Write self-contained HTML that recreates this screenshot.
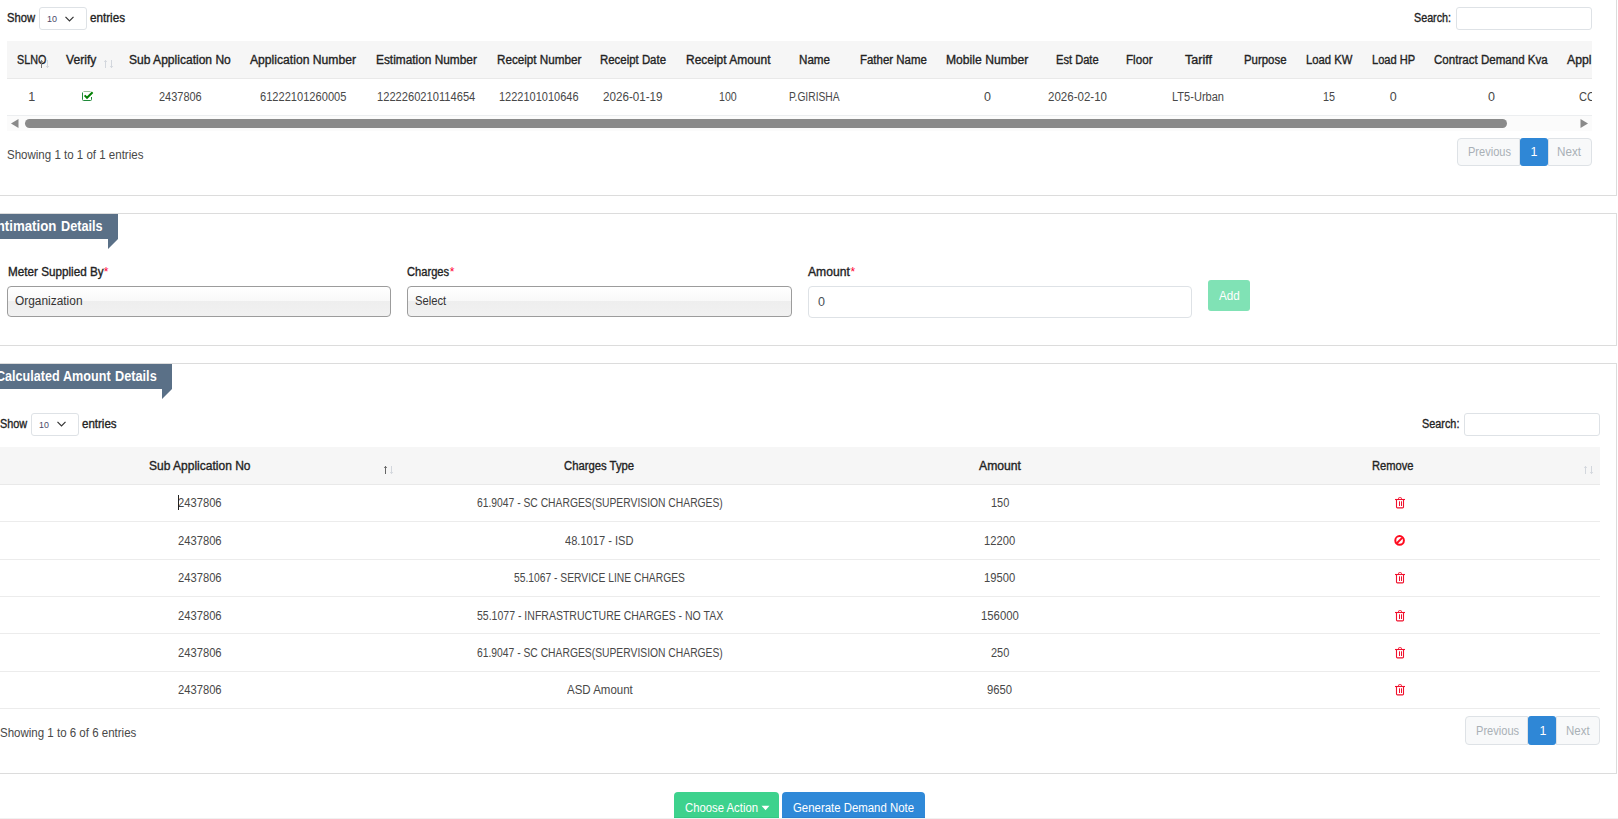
<!DOCTYPE html>
<html><head><meta charset="utf-8"><style>
html,body{margin:0;padding:0;}
body{width:1618px;height:819px;overflow:hidden;position:relative;background:#fff;font-family:"Liberation Sans",sans-serif;}
.t{position:absolute;white-space:nowrap;line-height:normal;transform-origin:0 0;}
.r{position:absolute;box-sizing:border-box;}
svg{position:absolute;}
</style></head><body>
<div class="r" style="left:-10px;top:-10px;width:1627px;height:206px;border:1px solid #dcdcdc;background:#fff;"></div>
<div class="t" style="left:7.40px;top:11.00px;font-size:12.5px;color:#232323;transform:scaleX(0.8978);-webkit-text-stroke:0.35px #232323;">Show</div>
<div class="r" style="left:39px;top:7px;width:48px;height:23px;border:1px solid #dee2e6;border-radius:3px;background:#fff;"></div>
<div class="t" style="left:46.70px;top:13.00px;font-size:9.5px;color:#4a4a68;transform:scaleX(0.9466);">10</div>
<svg style="left:64px;top:15px" width="11" height="8" viewBox="0 0 11 8"><path d="M1.5 1.8 L5.5 5.8 L9.5 1.8" fill="none" stroke="#333" stroke-width="1.2"/></svg>
<div class="t" style="left:90.00px;top:11.00px;font-size:12.5px;color:#232323;transform:scaleX(0.9330);-webkit-text-stroke:0.35px #232323;">entries</div>
<div class="t" style="left:1414.00px;top:11.00px;font-size:12.5px;color:#232323;transform:scaleX(0.8590);-webkit-text-stroke:0.35px #232323;">Search:</div>
<div class="r" style="left:1456px;top:7px;width:136px;height:23px;border:1px solid #dee2e6;border-radius:3px;background:#fff;"></div>
<div class="r" style="left:7px;top:41px;width:1585px;height:38px;background:#f6f6f6;border-bottom:1px solid #e9e9e9;"></div>
<div class="r" style="left:7px;top:115px;width:1585px;height:1px;background:#eceef0;"></div>
<div class="r" style="left:7px;top:116px;width:1585px;height:15px;background:#fbfbfb;"></div>
<div class="r" style="left:25px;top:119px;width:1482px;height:9px;background:#8a8a8a;border-radius:4.5px;"></div>
<svg style="left:10px;top:118px" width="10" height="11" viewBox="0 0 10 11"><path d="M1 5.5 L8.5 1 L8.5 10 Z" fill="#8a8a8a"/></svg>
<svg style="left:1579px;top:118px" width="10" height="11" viewBox="0 0 10 11"><path d="M9 5.5 L1.5 1 L1.5 10 Z" fill="#8a8a8a"/></svg>
<div class="t" style="left:16.70px;top:53.00px;font-size:12.5px;color:#232323;transform:scaleX(0.8608);-webkit-text-stroke:0.35px #232323;">SLNO</div>
<div class="t" style="left:65.50px;top:53.00px;font-size:12.5px;color:#232323;transform:scaleX(0.9692);-webkit-text-stroke:0.35px #232323;">Verify</div>
<div class="t" style="left:129.20px;top:53.00px;font-size:12.5px;color:#232323;transform:scaleX(0.9638);-webkit-text-stroke:0.35px #232323;">Sub Application No</div>
<div class="t" style="left:250.00px;top:53.00px;font-size:12.5px;color:#232323;transform:scaleX(0.9717);-webkit-text-stroke:0.35px #232323;">Application Number</div>
<div class="t" style="left:375.50px;top:53.00px;font-size:12.5px;color:#232323;transform:scaleX(0.9493);-webkit-text-stroke:0.35px #232323;">Estimation Number</div>
<div class="t" style="left:496.60px;top:53.00px;font-size:12.5px;color:#232323;transform:scaleX(0.9345);-webkit-text-stroke:0.35px #232323;">Receipt Number</div>
<div class="t" style="left:600.00px;top:53.00px;font-size:12.5px;color:#232323;transform:scaleX(0.9133);-webkit-text-stroke:0.35px #232323;">Receipt Date</div>
<div class="t" style="left:685.50px;top:53.00px;font-size:12.5px;color:#232323;transform:scaleX(0.9575);-webkit-text-stroke:0.35px #232323;">Receipt Amount</div>
<div class="t" style="left:799.00px;top:53.00px;font-size:12.5px;color:#232323;transform:scaleX(0.9295);-webkit-text-stroke:0.35px #232323;">Name</div>
<div class="t" style="left:859.80px;top:53.00px;font-size:12.5px;color:#232323;transform:scaleX(0.9159);-webkit-text-stroke:0.35px #232323;">Father Name</div>
<div class="t" style="left:946.40px;top:53.00px;font-size:12.5px;color:#232323;transform:scaleX(0.9711);-webkit-text-stroke:0.35px #232323;">Mobile Number</div>
<div class="t" style="left:1056.00px;top:53.00px;font-size:12.5px;color:#232323;transform:scaleX(0.8887);-webkit-text-stroke:0.35px #232323;">Est Date</div>
<div class="t" style="left:1126.30px;top:53.00px;font-size:12.5px;color:#232323;transform:scaleX(0.9306);-webkit-text-stroke:0.35px #232323;">Floor</div>
<div class="t" style="left:1185.00px;top:53.00px;font-size:12.5px;color:#232323;transform:scaleX(1.0042);-webkit-text-stroke:0.35px #232323;">Tariff</div>
<div class="t" style="left:1244.00px;top:53.00px;font-size:12.5px;color:#232323;transform:scaleX(0.9128);-webkit-text-stroke:0.35px #232323;">Purpose</div>
<div class="t" style="left:1305.80px;top:53.00px;font-size:12.5px;color:#232323;transform:scaleX(0.9025);-webkit-text-stroke:0.35px #232323;">Load KW</div>
<div class="t" style="left:1371.80px;top:53.00px;font-size:12.5px;color:#232323;transform:scaleX(0.8880);-webkit-text-stroke:0.35px #232323;">Load HP</div>
<div class="t" style="left:1434.30px;top:53.00px;font-size:12.5px;color:#232323;transform:scaleX(0.9245);-webkit-text-stroke:0.35px #232323;">Contract Demand Kva</div>
<div class="t" style="left:28.20px;top:90.00px;font-size:12.5px;color:#484848;letter-spacing:0.000px;">1</div>
<div class="t" style="left:158.80px;top:90.00px;font-size:12.5px;color:#484848;transform:scaleX(0.8775);">2437806</div>
<div class="t" style="left:259.60px;top:90.00px;font-size:12.5px;color:#484848;transform:scaleX(0.8877);">61222101260005</div>
<div class="t" style="left:377.30px;top:90.00px;font-size:12.5px;color:#484848;transform:scaleX(0.8912);">1222260210114654</div>
<div class="t" style="left:499.00px;top:90.00px;font-size:12.5px;color:#484848;transform:scaleX(0.8797);">1222101010646</div>
<div class="t" style="left:603.00px;top:90.00px;font-size:12.5px;color:#484848;transform:scaleX(0.9306);">2026-01-19</div>
<div class="t" style="left:719.00px;top:90.00px;font-size:12.5px;color:#484848;transform:scaleX(0.8489);">100</div>
<div class="t" style="left:789.40px;top:90.00px;font-size:12.5px;color:#484848;transform:scaleX(0.8214);">P.GIRISHA</div>
<div class="t" style="left:984.00px;top:90.00px;font-size:12.5px;color:#484848;letter-spacing:0.000px;">0</div>
<div class="t" style="left:1048.00px;top:90.00px;font-size:12.5px;color:#484848;transform:scaleX(0.9228);">2026-02-10</div>
<div class="t" style="left:1172.00px;top:90.00px;font-size:12.5px;color:#484848;transform:scaleX(0.8840);">LT5-Urban</div>
<div class="t" style="left:1323.00px;top:90.00px;font-size:12.5px;color:#484848;transform:scaleX(0.8633);">15</div>
<div class="t" style="left:1389.80px;top:90.00px;font-size:12.5px;color:#484848;letter-spacing:0.000px;">0</div>
<div class="t" style="left:1488.00px;top:90.00px;font-size:12.5px;color:#484848;letter-spacing:0.000px;">0</div>
<div style="position:absolute;left:1500px;top:41px;width:92px;height:75px;overflow:hidden">
<div class="t" style="left:67.30px;top:12.00px;font-size:12.5px;color:#232323;transform:scaleX(0.9795);-webkit-text-stroke:0.35px #232323;">Appl</div>
<div class="t" style="left:79.40px;top:49.00px;font-size:12.5px;color:#484848;transform:scaleX(0.8864);">CC</div>
</div>
<svg style="left:40px;top:60px" width="10" height="9" viewBox="0 0 10 9"><path d="M1.5 0.3 V8 M0.2 1.8 L1.5 0.4 L2.8 1.8" fill="none" stroke="#777" stroke-width="1"/><path d="M7.5 0 V7.7 M6.2 6.2 L7.5 7.6 L8.8 6.2" fill="none" stroke="#d3d7dd" stroke-width="1"/></svg>
<svg style="left:104px;top:60px" width="10" height="9" viewBox="0 0 10 9"><path d="M1.5 0.3 V8 M0.2 1.8 L1.5 0.4 L2.8 1.8" fill="none" stroke="#d3d7dd" stroke-width="1"/><path d="M7.5 0 V7.7 M6.2 6.2 L7.5 7.6 L8.8 6.2" fill="none" stroke="#d3d7dd" stroke-width="1"/></svg>
<svg style="left:82px;top:91px" width="13" height="11" viewBox="0 0 13 11"><path d="M1.5 0.5 H8.5" stroke="#9dbf9d" stroke-width="1" fill="none"/><path d="M0.5 1.5 V8.5 Q0.5 9.5 1.5 9.5 H8.5 Q9.5 9.5 9.5 8.5 V6" stroke="#1f8a3a" stroke-width="1" fill="none"/><path d="M2.6 4.4 L5 6.8 L10.6 1.2" fill="none" stroke="#038003" stroke-width="2"/></svg>
<div class="t" style="left:7.00px;top:148.00px;font-size:12.5px;color:#484848;transform:scaleX(0.9215);">Showing 1 to 1 of 1 entries</div>
<div class="r" style="left:1457px;top:138px;width:63px;height:28px;border:1px solid #dee2e6;border-radius:4px 0 0 4px;background:#f8f9fa;"></div>
<div class="r" style="left:1520px;top:138px;width:28px;height:28px;background:#2f87d6;border-radius:3px;"></div>
<div class="r" style="left:1548px;top:138px;width:44px;height:28px;border:1px solid #dee2e6;border-radius:0 4px 4px 0;background:#f8f9fa;"></div>
<div class="t" style="left:1468.00px;top:145.00px;font-size:12.5px;color:#a9b0b6;transform:scaleX(0.8841);">Previous</div>
<div class="t" style="left:1530.50px;top:145.00px;font-size:12.5px;color:#fff;letter-spacing:0.000px;">1</div>
<div class="t" style="left:1557.00px;top:145.00px;font-size:12.5px;color:#a9b0b6;transform:scaleX(0.9339);">Next</div>
<div class="r" style="left:-10px;top:213px;width:1627px;height:133px;border:1px solid #dcdcdc;background:#fff;"></div>
<svg style="left:0;top:0" width="120" height="251" viewBox="0 0 120 251"><path d="M0 214 H118 V239 L108 249 V239 H0 Z" fill="#5a7087"/></svg>
<div class="t" style="left:-6.69px;top:218px;font-size:14.5px;font-weight:700;color:#fff;transform:scaleX(0.9149)">Intimation</div>
<div class="t" style="left:61.00px;top:218px;font-size:14.5px;font-weight:700;color:#fff;transform:scaleX(0.8728)">Details</div>
<div class="t" style="left:7.80px;top:265.00px;font-size:12.5px;color:#222;transform:scaleX(0.9360);-webkit-text-stroke:0.35px #222;">Meter Supplied By</div>
<div class="t" style="left:103.80px;top:265.00px;font-size:12px;color:#ff0033;letter-spacing:0.000px;">*</div>
<div class="t" style="left:407.20px;top:265.00px;font-size:12.5px;color:#222;transform:scaleX(0.8910);-webkit-text-stroke:0.35px #222;">Charges</div>
<div class="t" style="left:449.80px;top:265.00px;font-size:12px;color:#ff0033;letter-spacing:0.000px;">*</div>
<div class="t" style="left:807.70px;top:265.00px;font-size:12.5px;color:#222;transform:scaleX(0.9727);-webkit-text-stroke:0.35px #222;">Amount</div>
<div class="t" style="left:850.50px;top:265.00px;font-size:12px;color:#ff0033;letter-spacing:0.000px;">*</div>
<div class="r" style="left:7px;top:286px;width:384px;height:31px;border:1px solid #9c9c9c;border-radius:4px;background:linear-gradient(#fff 0%,#f8f8f8 50%,#eeeeee 50%,#f1f1f1 100%);"></div>
<div class="r" style="left:407px;top:286px;width:385px;height:31px;border:1px solid #9c9c9c;border-radius:4px;background:linear-gradient(#fff 0%,#f8f8f8 50%,#eeeeee 50%,#f1f1f1 100%);"></div>
<div class="t" style="left:14.70px;top:294.00px;font-size:12.5px;color:#333;transform:scaleX(0.9524);">Organization</div>
<div class="t" style="left:414.80px;top:294.00px;font-size:12.5px;color:#333;transform:scaleX(0.8982);">Select</div>
<div class="r" style="left:808px;top:286px;width:384px;height:32px;border:1px solid #dee2e6;border-radius:4px;background:#fff;"></div>
<div class="t" style="left:818.00px;top:295.00px;font-size:12.5px;color:#495057;letter-spacing:0.000px;">0</div>
<div class="r" style="left:1208px;top:280px;width:42px;height:31px;background:#80e2b5;border-radius:3px;"></div>
<div class="t" style="left:1218.50px;top:289.00px;font-size:12.5px;color:#fff;transform:scaleX(0.9354);">Add</div>
<div class="r" style="left:-10px;top:363px;width:1627px;height:411px;border:1px solid #dcdcdc;background:#fff;"></div>
<svg style="left:0;top:0" width="174" height="401" viewBox="0 0 174 401"><path d="M0 364 H172 V389 L162 399 V389 H0 Z" fill="#5a7087"/></svg>
<div class="t" style="left:-4.28px;top:368px;font-size:14.5px;font-weight:700;color:#fff;transform:scaleX(0.8670)">Calculated</div>
<div class="t" style="left:63.00px;top:368px;font-size:14.5px;font-weight:700;color:#fff;transform:scaleX(0.8691)">Amount</div>
<div class="t" style="left:115.00px;top:368px;font-size:14.5px;font-weight:700;color:#fff;transform:scaleX(0.8771)">Details</div>
<div class="t" style="left:0.00px;top:417.00px;font-size:12.5px;color:#232323;transform:scaleX(0.8690);-webkit-text-stroke:0.35px #232323;">Show</div>
<div class="r" style="left:31px;top:413px;width:48px;height:23px;border:1px solid #dee2e6;border-radius:3px;background:#fff;"></div>
<div class="t" style="left:39.00px;top:419.00px;font-size:9.5px;color:#4a4a68;transform:scaleX(0.9277);">10</div>
<svg style="left:56px;top:420px" width="11" height="8" viewBox="0 0 11 8"><path d="M1.5 1.8 L5.5 5.8 L9.5 1.8" fill="none" stroke="#333" stroke-width="1.2"/></svg>
<div class="t" style="left:82.20px;top:417.00px;font-size:12.5px;color:#232323;transform:scaleX(0.9224);-webkit-text-stroke:0.35px #232323;">entries</div>
<div class="t" style="left:1422.00px;top:417.00px;font-size:12.5px;color:#232323;transform:scaleX(0.8683);-webkit-text-stroke:0.35px #232323;">Search:</div>
<div class="r" style="left:1464px;top:413px;width:136px;height:23px;border:1px solid #dee2e6;border-radius:3px;background:#fff;"></div>
<div class="r" style="left:-1px;top:447px;width:1601px;height:38px;background:#f6f6f6;border-bottom:1px solid #e9e9e9;"></div>
<div class="r" style="left:-1px;top:521px;width:1601px;height:1px;background:#ececec;"></div>
<div class="r" style="left:-1px;top:559px;width:1601px;height:1px;background:#ececec;"></div>
<div class="r" style="left:-1px;top:596px;width:1601px;height:1px;background:#ececec;"></div>
<div class="r" style="left:-1px;top:633px;width:1601px;height:1px;background:#ececec;"></div>
<div class="r" style="left:-1px;top:671px;width:1601px;height:1px;background:#ececec;"></div>
<div class="r" style="left:-1px;top:708px;width:1601px;height:1px;background:#ececec;"></div>
<div class="t" style="left:148.50px;top:459.00px;font-size:12.5px;color:#232323;transform:scaleX(0.9609);-webkit-text-stroke:0.35px #232323;">Sub Application No</div>
<div class="t" style="left:564.40px;top:459.00px;font-size:12.5px;color:#232323;transform:scaleX(0.9034);-webkit-text-stroke:0.35px #232323;">Charges Type</div>
<div class="t" style="left:979.00px;top:459.00px;font-size:12.5px;color:#232323;transform:scaleX(0.9750);-webkit-text-stroke:0.35px #232323;">Amount</div>
<div class="t" style="left:1372.20px;top:459.00px;font-size:12.5px;color:#232323;transform:scaleX(0.8915);-webkit-text-stroke:0.35px #232323;">Remove</div>
<svg style="left:384px;top:466px" width="10" height="9" viewBox="0 0 10 9"><path d="M1.5 0.3 V8 M0.2 1.8 L1.5 0.4 L2.8 1.8" fill="none" stroke="#666" stroke-width="1"/><path d="M7.5 0 V7.7 M6.2 6.2 L7.5 7.6 L8.8 6.2" fill="none" stroke="#d3d7dd" stroke-width="1"/></svg>
<svg style="left:1584px;top:466px" width="10" height="9" viewBox="0 0 10 9"><path d="M1.5 0.3 V8 M0.2 1.8 L1.5 0.4 L2.8 1.8" fill="none" stroke="#d3d7dd" stroke-width="1"/><path d="M7.5 0 V7.7 M6.2 6.2 L7.5 7.6 L8.8 6.2" fill="none" stroke="#d3d7dd" stroke-width="1"/></svg>
<div class="t" style="left:177.50px;top:496.00px;font-size:12.5px;color:#484848;transform:scaleX(0.8960);">2437806</div>
<div class="t" style="left:476.60px;top:496.00px;font-size:12.5px;color:#484848;transform:scaleX(0.8255);">61.9047 - SC CHARGES(SUPERVISION CHARGES)</div>
<div class="t" style="left:991.00px;top:496.00px;font-size:12.5px;color:#484848;transform:scaleX(0.8777);">150</div>
<svg style="left:1394px;top:497px" width="12" height="12" viewBox="0 0 12 12"><path d="M1 2.5 H11" stroke="#f0112d" stroke-width="1.1" fill="none"/><path d="M4.5 2.2 V1.5 Q4.5 0.6 5.4 0.6 H6.6 Q7.5 0.6 7.5 1.5 V2.2" stroke="#f0112d" stroke-width="1" fill="none"/><path d="M2.5 2.8 V10 Q2.5 10.9 3.4 10.9 H8.6 Q9.5 10.9 9.5 10 V2.8" stroke="#f0112d" stroke-width="1.1" fill="none"/><path d="M5.5 4.3 V9 M7.5 4.3 V9" stroke="#f0112d" stroke-width="1"/></svg>
<div class="t" style="left:177.50px;top:534.00px;font-size:12.5px;color:#484848;transform:scaleX(0.8960);">2437806</div>
<div class="t" style="left:565.30px;top:534.00px;font-size:12.5px;color:#484848;transform:scaleX(0.8869);">48.1017 - ISD</div>
<div class="t" style="left:984.20px;top:534.00px;font-size:12.5px;color:#484848;transform:scaleX(0.8946);">12200</div>
<svg style="left:1393px;top:534px" width="13" height="13" viewBox="0 0 13 13"><circle cx="6.6" cy="6.4" r="4.3" fill="none" stroke="#ff0a1e" stroke-width="2"/><path d="M3.8 9.2 L9.4 3.6" stroke="#ff0a1e" stroke-width="2"/></svg>
<div class="t" style="left:177.50px;top:571.00px;font-size:12.5px;color:#484848;transform:scaleX(0.8960);">2437806</div>
<div class="t" style="left:513.80px;top:571.00px;font-size:12.5px;color:#484848;transform:scaleX(0.8236);">55.1067 - SERVICE LINE CHARGES</div>
<div class="t" style="left:984.20px;top:571.00px;font-size:12.5px;color:#484848;transform:scaleX(0.8946);">19500</div>
<svg style="left:1394px;top:572px" width="12" height="12" viewBox="0 0 12 12"><path d="M1 2.5 H11" stroke="#f0112d" stroke-width="1.1" fill="none"/><path d="M4.5 2.2 V1.5 Q4.5 0.6 5.4 0.6 H6.6 Q7.5 0.6 7.5 1.5 V2.2" stroke="#f0112d" stroke-width="1" fill="none"/><path d="M2.5 2.8 V10 Q2.5 10.9 3.4 10.9 H8.6 Q9.5 10.9 9.5 10 V2.8" stroke="#f0112d" stroke-width="1.1" fill="none"/><path d="M5.5 4.3 V9 M7.5 4.3 V9" stroke="#f0112d" stroke-width="1"/></svg>
<div class="t" style="left:177.50px;top:609.00px;font-size:12.5px;color:#484848;transform:scaleX(0.8960);">2437806</div>
<div class="t" style="left:476.60px;top:609.00px;font-size:12.5px;color:#484848;transform:scaleX(0.8413);">55.1077 - INFRASTRUCTURE CHARGES - NO TAX</div>
<div class="t" style="left:981.00px;top:609.00px;font-size:12.5px;color:#484848;transform:scaleX(0.9062);">156000</div>
<svg style="left:1394px;top:610px" width="12" height="12" viewBox="0 0 12 12"><path d="M1 2.5 H11" stroke="#f0112d" stroke-width="1.1" fill="none"/><path d="M4.5 2.2 V1.5 Q4.5 0.6 5.4 0.6 H6.6 Q7.5 0.6 7.5 1.5 V2.2" stroke="#f0112d" stroke-width="1" fill="none"/><path d="M2.5 2.8 V10 Q2.5 10.9 3.4 10.9 H8.6 Q9.5 10.9 9.5 10 V2.8" stroke="#f0112d" stroke-width="1.1" fill="none"/><path d="M5.5 4.3 V9 M7.5 4.3 V9" stroke="#f0112d" stroke-width="1"/></svg>
<div class="t" style="left:177.50px;top:646.00px;font-size:12.5px;color:#484848;transform:scaleX(0.8960);">2437806</div>
<div class="t" style="left:476.60px;top:646.00px;font-size:12.5px;color:#484848;transform:scaleX(0.8255);">61.9047 - SC CHARGES(SUPERVISION CHARGES)</div>
<div class="t" style="left:991.00px;top:646.00px;font-size:12.5px;color:#484848;transform:scaleX(0.8777);">250</div>
<svg style="left:1394px;top:647px" width="12" height="12" viewBox="0 0 12 12"><path d="M1 2.5 H11" stroke="#f0112d" stroke-width="1.1" fill="none"/><path d="M4.5 2.2 V1.5 Q4.5 0.6 5.4 0.6 H6.6 Q7.5 0.6 7.5 1.5 V2.2" stroke="#f0112d" stroke-width="1" fill="none"/><path d="M2.5 2.8 V10 Q2.5 10.9 3.4 10.9 H8.6 Q9.5 10.9 9.5 10 V2.8" stroke="#f0112d" stroke-width="1.1" fill="none"/><path d="M5.5 4.3 V9 M7.5 4.3 V9" stroke="#f0112d" stroke-width="1"/></svg>
<div class="t" style="left:177.50px;top:683.00px;font-size:12.5px;color:#484848;transform:scaleX(0.8960);">2437806</div>
<div class="t" style="left:566.60px;top:683.00px;font-size:12.5px;color:#484848;transform:scaleX(0.9195);">ASD Amount</div>
<div class="t" style="left:987.20px;top:683.00px;font-size:12.5px;color:#484848;transform:scaleX(0.9025);">9650</div>
<svg style="left:1394px;top:684px" width="12" height="12" viewBox="0 0 12 12"><path d="M1 2.5 H11" stroke="#f0112d" stroke-width="1.1" fill="none"/><path d="M4.5 2.2 V1.5 Q4.5 0.6 5.4 0.6 H6.6 Q7.5 0.6 7.5 1.5 V2.2" stroke="#f0112d" stroke-width="1" fill="none"/><path d="M2.5 2.8 V10 Q2.5 10.9 3.4 10.9 H8.6 Q9.5 10.9 9.5 10 V2.8" stroke="#f0112d" stroke-width="1.1" fill="none"/><path d="M5.5 4.3 V9 M7.5 4.3 V9" stroke="#f0112d" stroke-width="1"/></svg>
<div style="position:absolute;left:1377px;top:477px;width:0;height:0"></div>
<div class="t" style="left:-0.50px;top:726.00px;font-size:12.5px;color:#484848;transform:scaleX(0.9209);">Showing 1 to 6 of 6 entries</div>
<div class="r" style="left:1465px;top:716px;width:63px;height:29px;border:1px solid #dee2e6;border-radius:4px 0 0 4px;background:#f8f9fa;"></div>
<div class="r" style="left:1528px;top:716px;width:28px;height:29px;background:#2f87d6;border-radius:3px;"></div>
<div class="r" style="left:1556px;top:716px;width:44px;height:29px;border:1px solid #dee2e6;border-radius:0 4px 4px 0;background:#f8f9fa;"></div>
<div class="t" style="left:1475.60px;top:724.00px;font-size:12.5px;color:#a9b0b6;transform:scaleX(0.8861);">Previous</div>
<div class="t" style="left:1539.50px;top:724.00px;font-size:12.5px;color:#fff;letter-spacing:0.000px;">1</div>
<div class="t" style="left:1566.00px;top:724.00px;font-size:12.5px;color:#a9b0b6;transform:scaleX(0.9183);">Next</div>
<div class="r" style="left:674px;top:792px;width:105px;height:26px;background:#3dd28d;border-radius:4px 4px 0 0;border-bottom:1px solid #34c883;"></div>
<div class="t" style="left:685.00px;top:801.00px;font-size:12.5px;color:#fff;transform:scaleX(0.9056);">Choose Action</div>
<svg style="left:761px;top:805px" width="9" height="6" viewBox="0 0 9 6"><path d="M0.5 0.8 H8.5 L4.5 5.2 Z" fill="#fff"/></svg>
<div class="r" style="left:782px;top:792px;width:143px;height:26px;background:#2f89d8;border-radius:4px 4px 0 0;border-bottom:1px solid #2a7fcf;"></div>
<div class="t" style="left:793.00px;top:801.00px;font-size:12.5px;color:#fff;transform:scaleX(0.9117);">Generate Demand Note</div>
<div class="r" style="left:0px;top:818px;width:1618px;height:1px;background:#f1f1f1;"></div>
<div class="r" style="left:178px;top:495px;width:1px;height:15px;background:#222;"></div>
</body></html>
